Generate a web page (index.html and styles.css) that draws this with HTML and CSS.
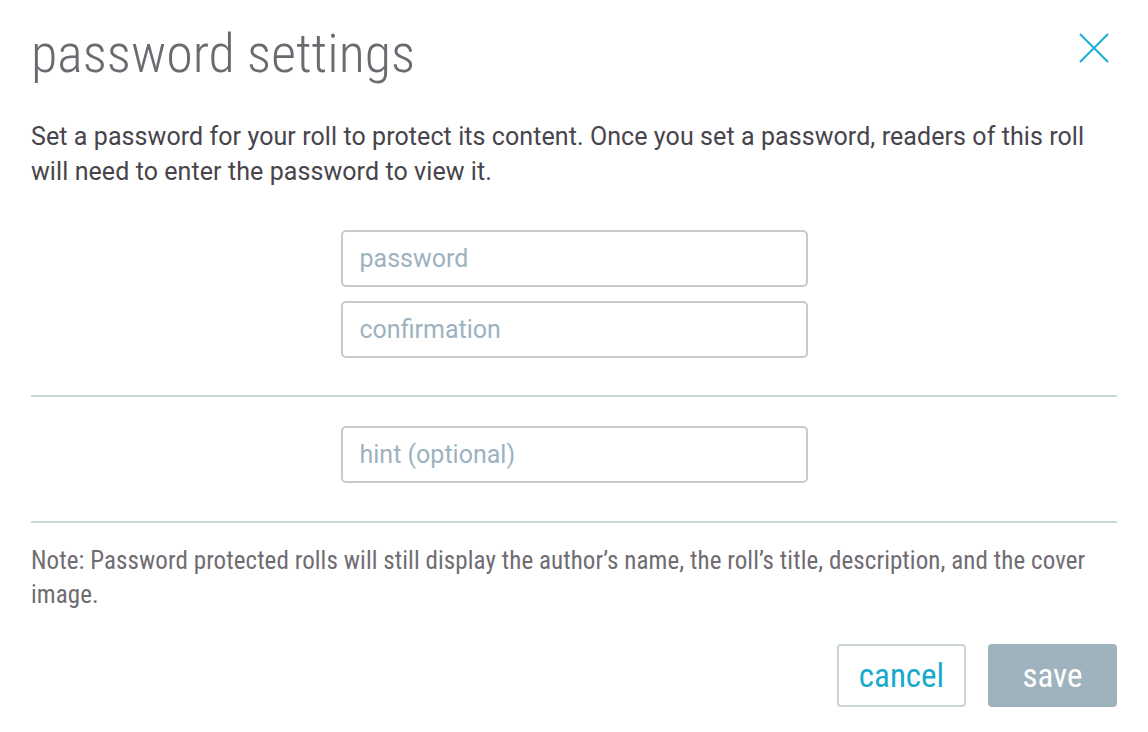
FILE: index.html
```html
<!DOCTYPE html>
<html lang="en">
<head>
  <meta charset="UTF-8" />
  <title>password settings</title>
  <link rel="stylesheet" href="styles.css">
</head>
<body>
  <div class="modal">
    <div class="modal-header">
      <h1>password settings</h1>
      <button class="close-btn" aria-label="close">
        <svg width="30" height="30" viewBox="0 0 30 30">
          <path d="M1 1 L29 29 M29 1 L1 29" stroke="#16b1d1" stroke-width="2" fill="none" />
        </svg>
      </button>
    </div>

    <p class="intro">Set a password for your roll to protect its content. Once you set a password, readers of this roll will need to enter the password to view it.</p>

    <div class="fields fields-password">
      <input type="password" placeholder="password">
      <input type="password" placeholder="confirmation">
    </div>

    <hr>

    <div class="fields fields-hint">
      <input type="text" placeholder="hint (optional)">
    </div>

    <hr>

    <p class="note">Note: Password protected rolls will still display the author’s name, the roll’s title, description, and the cover image.</p>

    <div class="actions">
      <button class="btn btn-cancel">cancel</button>
      <button class="btn btn-save">save</button>
    </div>
  </div>
</body>
</html>
```

FILE: styles.css
```css
body {
  margin: 0;
  padding: 0;
  background: #fff;
  font-family: Roboto, sans-serif;
  color: #47444b;
}

.modal {
  padding: 22px 31px 0 31px;
}

.modal-header {
  display: flex;
  justify-content: space-between;
  align-items: flex-start;
}

h1 {
  margin: 0;
  font-weight: 300;
  font-size: 54px;
  line-height: 64px;
  font-stretch: 75%;
  color: #6c6a70;
}

.close-btn {
  background: none;
  border: none;
  padding: 0;
  margin: 11px 8px 0 0;
  line-height: 0;
  cursor: pointer;
}

.intro {
  margin: 33px 0 0 0;
  font-size: 25px;
  line-height: 35px;
  letter-spacing: 0.08px;
  color: #47444b;
}

.fields {
  display: flex;
  flex-direction: column;
  align-items: center;
  gap: 14px;
}

.fields-password {
  margin: 41px 0 37px 0;
}

.fields-hint {
  margin: 29px 0 38px 0;
}

input {
  box-sizing: border-box;
  width: 467px;
  height: 57px;
  padding: 0 17px;
  border: 2px solid #cbc7cc;
  border-radius: 5px;
  font-family: Roboto, sans-serif;
  font-size: 25px;
  color: #47444b;
  outline: none;
}

input::placeholder {
  color: #9db2bf;
}

hr {
  margin: 0;
  border: none;
  border-top: 2px solid #c9d5d8;
}

.note {
  margin: 21px 0 0 0;
  font-size: 25px;
  font-stretch: 75%;
  line-height: 34px;
  letter-spacing: 0.08px;
  color: #6f6c72;
}

.actions {
  display: flex;
  justify-content: flex-end;
  gap: 22px;
  margin-top: 32px;
}

.btn {
  width: 129px;
  height: 63px;
  border-radius: 4px;
  font-family: Roboto, sans-serif;
  font-size: 33px;
  font-stretch: 75%;
  cursor: pointer;
}

.btn-cancel {
  background: #fff;
  border: 2px solid #c9d5d8;
  color: #17aacb;
}

.btn-save {
  background: #9fb3bf;
  border: none;
  color: #fff;
}
```
